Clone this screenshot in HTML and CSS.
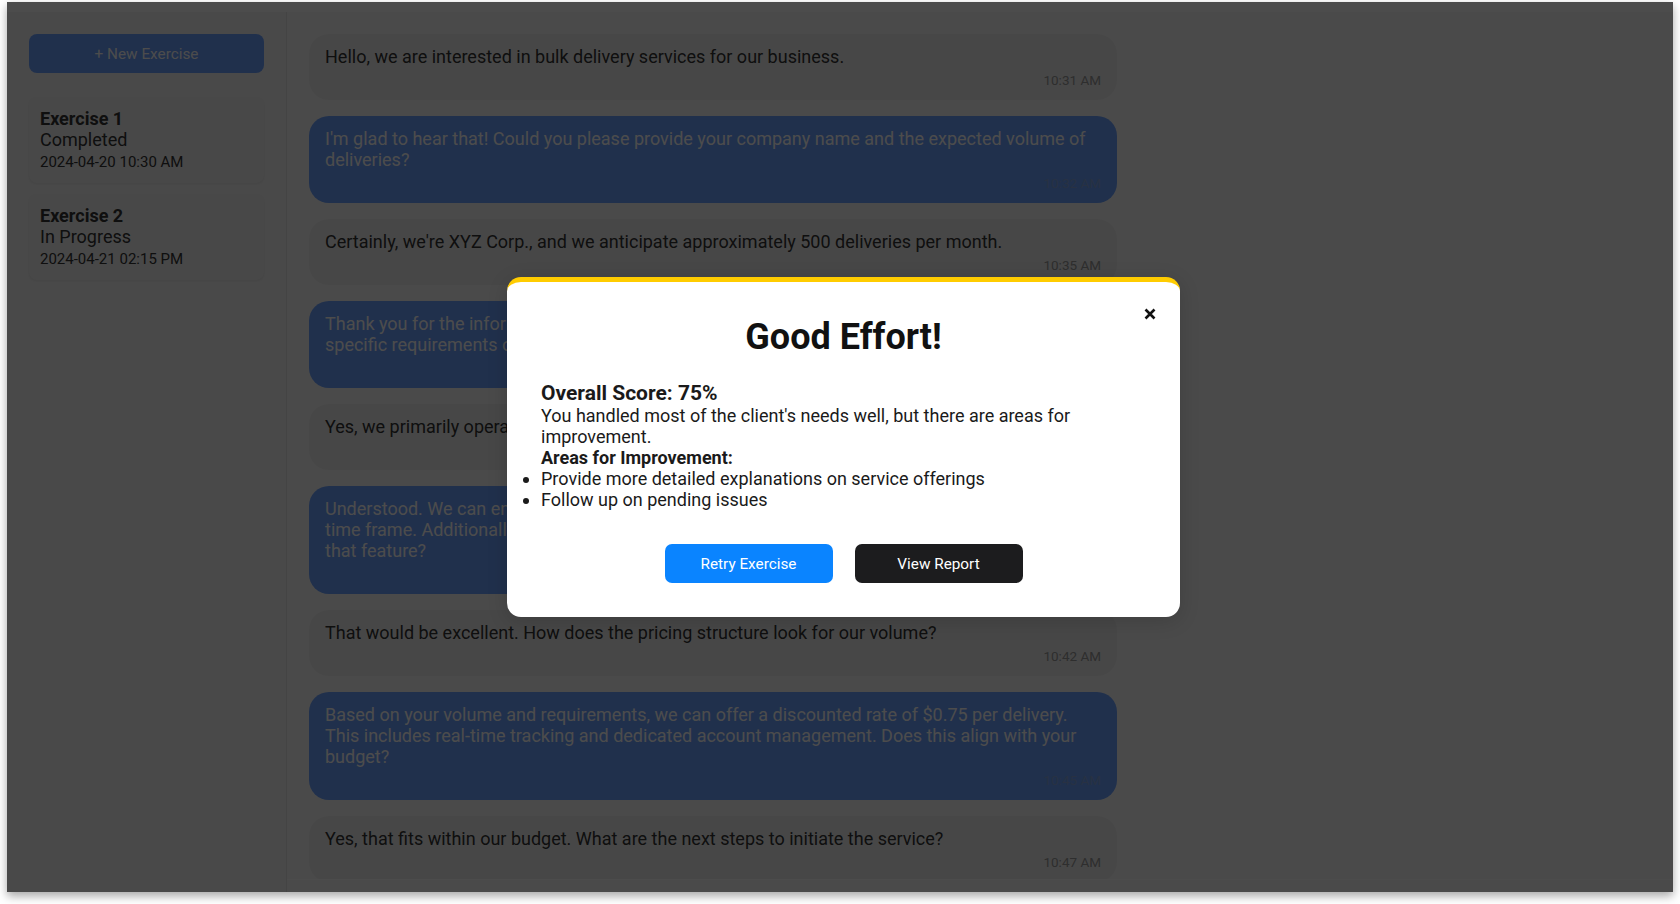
FILE: index.html
```html
<!DOCTYPE html>
<html lang="en">
<head>
  <meta charset="UTF-8" />
  <meta name="viewport" content="width=device-width, initial-scale=1.0" />
  <title>Sales Training – Chat Exercise</title>
  <link rel="stylesheet" href="styles.css">
</head>
<body>
  <div class="window">
    <div class="topbar"></div>

    <div class="app">
      <aside class="sidebar">
        <button class="new-btn">+ New Exercise</button>

        <div class="exercise-card">
          <div class="exercise-title">Exercise 1</div>
          <div class="exercise-status">Completed</div>
          <div class="exercise-date">2024-04-20 10:30 AM</div>
        </div>

        <div class="exercise-card">
          <div class="exercise-title">Exercise 2</div>
          <div class="exercise-status">In Progress</div>
          <div class="exercise-date">2024-04-21 02:15 PM</div>
        </div>
      </aside>

      <main class="chat">
        <div class="messages">
          <div class="message client">
            <div class="text">Hello, we are interested in bulk delivery services for our business.</div>
            <div class="time">10:31 AM</div>
          </div>
          <div class="message agent">
            <div class="text">I'm glad to hear that! Could you please provide your company name and the expected volume of deliveries?</div>
            <div class="time">10:32 AM</div>
          </div>
          <div class="message client">
            <div class="text">Certainly, we're XYZ Corp., and we anticipate approximately 500 deliveries per month.</div>
            <div class="time">10:35 AM</div>
          </div>
          <div class="message agent">
            <div class="text">Thank you for the information. Could you please tell us your delivery locations and share any specific requirements or time constraints we should plan for?</div>
            <div class="time">10:38 AM</div>
          </div>
          <div class="message client">
            <div class="text">Yes, we primarily operate in the downtown area and need same-day delivery for most orders.</div>
            <div class="time">10:40 AM</div>
          </div>
          <div class="message agent">
            <div class="text">Understood. We can ensure all deliveries in the downtown area are completed within a same-day time frame. Additionally, we offer priority handling for urgent orders. Would you be interested in that feature?</div>
            <div class="time">10:41 AM</div>
          </div>
          <div class="message client">
            <div class="text">That would be excellent. How does the pricing structure look for our volume?</div>
            <div class="time">10:42 AM</div>
          </div>
          <div class="message agent">
            <div class="text">Based on your volume and requirements, we can offer a discounted rate of $0.75 per delivery. This includes real-time tracking and dedicated account management. Does this align with your budget?</div>
            <div class="time">10:45 AM</div>
          </div>
          <div class="message client">
            <div class="text">Yes, that fits within our budget. What are the next steps to initiate the service?</div>
            <div class="time">10:47 AM</div>
          </div>
        </div>
        <div class="composer"></div>
      </main>
    </div>

    <!-- result modal -->
    <div class="overlay">
      <div class="modal">
        <button class="close-btn" aria-label="Close">
          <svg width="12" height="12" viewBox="0 0 12 12">
            <path d="M1.5 1.5 L10.5 10.5 M10.5 1.5 L1.5 10.5" stroke="#111" stroke-width="2.6" />
          </svg>
        </button>
        <h1>Good Effort!</h1>
        <h3>Overall Score: 75%</h3>
        <p>You handled most of the client's needs well, but there are areas for improvement.</p>
        <strong>Areas for Improvement:</strong>
        <ul>
          <li>Provide more detailed explanations on service offerings</li>
          <li>Follow up on pending issues</li>
        </ul>
        <div class="actions">
          <button class="btn btn-primary">Retry Exercise</button>
          <button class="btn btn-dark">View Report</button>
        </div>
      </div>
    </div>
  </div>
</body>
</html>
```

FILE: styles.css
```css
* {
  box-sizing: border-box;
}

html, body {
  margin: 0;
  height: 100%;
  background: #ffffff;
  font-family: Roboto, 'Liberation Sans', sans-serif;
}

body {
  padding: 2px 7px 12px 7px;
}

.window {
  position: relative;
  height: 890px;
  display: flex;
  flex-direction: column;
  overflow: hidden;
  background: #f8f8f8;
  box-shadow: 0 4px 9px rgba(0, 0, 0, 0.35);
}

.topbar {
  height: 10px;
  background: #ffffff;
}

.app {
  flex: 1;
  display: flex;
  min-height: 0;
}

/* sidebar */

.sidebar {
  width: 280px;
  flex-shrink: 0;
  padding: 22px;
  background: #f5f5f5;
  border-right: 1px solid #e4e4e4;
}

.new-btn {
  display: block;
  width: 100%;
  padding: 10.5px 0;
  margin-bottom: 24px;
  border: none;
  border-radius: 8px;
  background: #6ba0ff;
  color: #fff;
  font-family: inherit;
  font-size: 15.3px;
}

.exercise-card {
  padding: 11px 11px 12px;
  margin-bottom: 11px;
  background: #f1f1f1;
  border-radius: 8px;
  box-shadow: 0 1px 3px rgba(0, 0, 0, 0.08);
  color: #333;
}

.exercise-title {
  font-size: 18px;
  font-weight: 700;
}

.exercise-status {
  font-size: 18px;
}

.exercise-date {
  margin-top: 3px;
  font-size: 15px;
}

/* chat */

.chat {
  flex: 1;
  display: flex;
  flex-direction: column;
  min-width: 0;
}

.messages {
  flex: 1;
  overflow: hidden;
  padding: 22px 22px 0;
}

.message {
  max-width: 808px;
  padding: 12px 16px;
  margin-bottom: 16px;
  border-radius: 20px;
  font-size: 18px;
}

.message.client {
  background: #efefef;
  color: #333;
}

.message.agent {
  background: #6ba0ff;
  color: #ffffff;
}

.message .time {
  margin-top: 5px;
  text-align: right;
  font-size: 13.5px;
  color: #999;
}

.message.agent .time {
  color: #85a6e0;
}

.composer {
  height: 13px;
  border-top: 1px solid #ffffff;
  background: #f8f8f8;
}

/* modal */

.overlay {
  position: absolute;
  inset: 0;
  display: flex;
  align-items: center;
  justify-content: center;
  padding-left: 7px;
  background: rgba(0, 0, 0, 0.7);
}

.modal {
  position: relative;
  width: 673px;
  padding: 34px;
  background: #ffffff;
  border-top: 5px solid #ffcc00;
  border-radius: 14px;
  box-shadow: 0 4px 20px rgba(0, 0, 0, 0.15);
  color: #1a1a1a;
  font-size: 18px;
}

.close-btn {
  position: absolute;
  top: 26px;
  right: 24px;
  padding: 0;
  border: none;
  background: transparent;
  cursor: pointer;
}

.modal h1 {
  margin: 0 0 23px;
  text-align: center;
  font-size: 36px;
  font-weight: 700;
  color: #111;
}

.modal h3 {
  margin: 0;
  font-size: 21px;
  font-weight: 700;
}

.modal p {
  margin: 0;
}

.modal strong {
  display: block;
}

.modal ul {
  margin: 0;
  padding-left: 0;
}

.actions {
  display: flex;
  justify-content: center;
  gap: 22px;
  margin-top: 34px;
}

.btn {
  width: 168px;
  padding: 10.5px 0;
  border: none;
  border-radius: 7px;
  color: #fff;
  font-family: inherit;
  font-size: 15.3px;
  cursor: pointer;
}

.btn-primary {
  background: #0a84ff;
}

.btn-dark {
  background: #1c1c1e;
}
```
